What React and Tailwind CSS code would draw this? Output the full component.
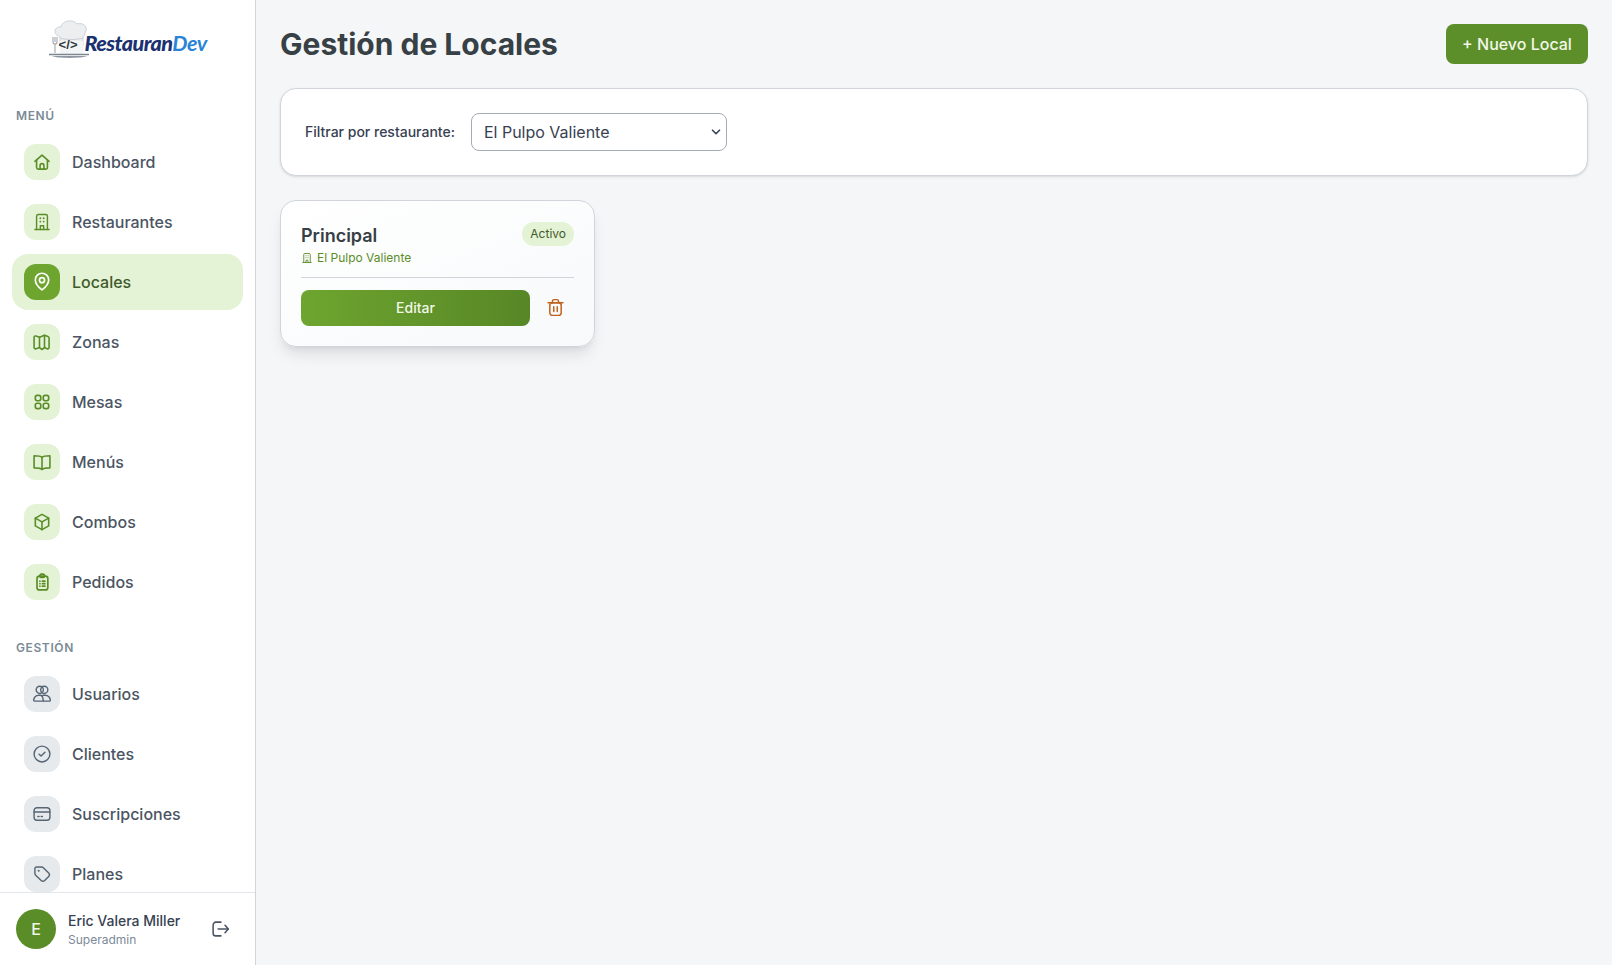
import React from "react";

const I = ({ children, size = 20, sw = 1.7 }) => (
  <svg width={size} height={size} viewBox="0 0 24 24" fill="none" stroke="currentColor" strokeWidth={sw} strokeLinecap="round" strokeLinejoin="round">
    {children}
  </svg>
);

const Home = () => <I sw={1.9}><path d="M3.500 11.200 12 3.800l8.500 7.400" /><path d="M5.500 10v8.500a2 2 0 0 0 2 2h9a2 2 0 0 0 2-2V10" /><path d="M9.700 20.500v-4.300a2.300 2.300 0 0 1 4.600 0v4.300" /></I>;
const Building = ({ size, sw }) => <I size={size} sw={sw}><path d="M3.500 21h17" /><path d="M5.500 21V5a2 2 0 0 1 2-2h9a2 2 0 0 1 2 2v16" /><path d="M10 7.500h.01M14 7.500h.01M10 11.500h.01M14 11.500h.01" strokeWidth="2.200" /><path d="M10 21v-4.500h4V21" /></I>;
const Pin = () => <I sw={2}><path d="M12 21.500s-8-6.300-8-12a8 8 0 0 1 16 0c0 5.700-8 12-8 12Z" /><circle cx="12" cy="9.800" r="3" /></I>;
const MapI = () => <I sw={1.9}><path d="M2.500 6.500c0-1.300 1.200-2.100 2.400-1.600L9 6.300l6-2.300 4.100 1.400c.9.300 1.400 1.100 1.400 2v11.100c0 1.300-1.200 2.100-2.400 1.600L15 18.700 12 21l-3-2.300-4.100 1.400C3.700 20.600 2.500 19.800 2.500 18.500Z" /><path d="M9 6.300V18.700M15 4V18.700" /></I>;
const Grid = () => <I sw={2}><rect x="4" y="4" width="6.500" height="6.500" rx="2.300" /><rect x="13.500" y="4" width="6.500" height="6.500" rx="2.300" /><rect x="4" y="13.500" width="6.500" height="6.500" rx="2.300" /><rect x="13.500" y="13.500" width="6.500" height="6.500" rx="2.300" /></I>;
const Book = () => <I sw={1.900}><path d="M12 6.500C10.300 4.900 8 4.500 2.500 4.500v14.500c5.500 0 7.800.4 9.500 2 1.700-1.600 4-2 9.500-2V4.500c-5.500 0-7.800.4-9.500 2Z" /><path d="M12 6.500V21" /></I>;
const Box = () => <I sw={1.900}><path d="M12 2.800 20 7.300v9.400l-8 4.500-8-4.500V7.300Z" /><path d="M4 7.300l8 4.500 8-4.500" /><path d="M12 11.800v9.400" /></I>;
const Clip = () => <I sw={2}><rect x="6" y="5" width="13" height="16.500" rx="3" /><path d="M9.500 5.500V4.500a2 2 0 0 1 2-2h1.500a2 2 0 0 1 2 2v1a1 1 0 0 1-1 1h-3.500a1 1 0 0 1-1-1Z" /><path d="M9.500 11h.01M9.500 14h.01M9.500 17h.01M12.500 11H15.500M12.500 14H15.500M12.500 17H15.500" /></I>;
const Users = () => <I><circle cx="9.300" cy="7" r="4.300" /><circle cx="14.700" cy="7" r="4.300" /><path d="M3 20.500c-.6 0-1-.4-1-1 0-3.300 2.700-6 6-6h2c1 0 1.600.5 2 1 .4-.5 1-1 2-1h2c3.300 0 6 2.700 6 6 0 .6-.4 1-1 1Z" /><path d="M12 14.500c1 1.200 1.500 3 1.500 6" /></I>;
const Check = () => <I><circle cx="12" cy="12" r="9.500" /><path d="m8.500 12.300 2.400 2.200 4.600-4.700" /></I>;
const Card = () => <I><rect x="2.500" y="4.500" width="19" height="15" rx="3.500" /><path d="M2.500 9.500h19" /><path d="M7 15h1.500M11 15h1.500" /></I>;
const Tag = () => <I><path d="M3.500 5.500a2 2 0 0 1 2-2h6a3 3 0 0 1 2.100.900l6.400 6.400a3 3 0 0 1 0 4.200l-4.800 4.800a3 3 0 0 1-4.200 0L4.400 13.600a3 3 0 0 1-.900-2.100Z" /><path d="M8 8h.01" strokeWidth="2.400" /></I>;
const Logout = () => <I size={22}><path d="M13 4.500H7.500a3 3 0 0 0-3 3v9a3 3 0 0 0 3 3H13" /><path d="M10 12h11" /><path d="m17.500 8 3.500 4-3.500 4" /></I>;
const Trash = () => <I size={21}><path d="M3.500 6.500h17" /><path d="M8.500 6.500V5a2 2 0 0 1 2-2h3a2 2 0 0 1 2 2v1.500" /><rect x="5.500" y="6.500" width="13" height="14.500" rx="3" /><path d="M10 11v5.500M14 11v5.500" /></I>;

const Item = ({ icon, label, active, gray }) => (
  <div className={`flex h-14 items-center gap-3 rounded-2xl px-3 ${active ? "bg-[#e4f2d5]" : ""}`}>
    <span className={`flex h-9 w-9 shrink-0 items-center justify-center rounded-xl ${active ? "bg-[#6ea52f] text-white" : gray ? "bg-[#e6eaed] text-[#566573]" : "bg-[#e4f2d5] text-[#5a8d28]"}`}>
      {icon}
    </span>
    <span className={`text-base font-medium ${active ? "text-[#3f5a2c]" : "text-[#4b5563]"}`}>{label}</span>
  </div>
);

const Logo = () => (
  <div className="flex h-[88px] items-center justify-center pb-[8px]">
    <div className="relative h-[40px] w-[160px]">
      <svg width="44" height="40" viewBox="0 0 44 40" className="absolute bottom-0 left-0">
        <path d="M11 16c-6-1-5-10 2-9 1-7 13-8 16-3 6-2 12 3 8 9 0 1-1 3-2 4v9H12v-9z" fill="#eceef0" stroke="#cfd3d7" strokeWidth="1" />
        <path d="M12 18c6 2 17 2 23 0" stroke="#c9ced3" fill="none" />
        <path d="M5 17v5c0 1 1 2 2 2v9M9 17v5c0 1-1 2-2 2M7 17v5" stroke="#a2a8ae" strokeWidth="1.100" fill="none" />
        <rect x="12" y="21" width="23" height="13" fill="#f3f4f5" />
        <path d="M1 34.500h40" stroke="#7d8791" strokeWidth="1.500" />
        <path d="M4 36c5 2.500 30 2.500 35 0z" fill="#8d96a0" />
      </svg>
      <span className="absolute bottom-[9px] left-[11px] font-['Liberation_Sans',sans-serif] text-[13px] font-bold leading-none tracking-[0.2px] text-[#343b42]">&lt;/&gt;</span>
      <span className="absolute bottom-[6px] left-[37px] font-['Lato',sans-serif] text-[21.5px] font-black italic leading-none tracking-[-0.55px] text-[#1b3270]">
        Restauran<span className="font-bold text-[#2b83d8]">Dev</span>
      </span>
    </div>
  </div>
);

export default function App() {
  return (
    <div className="flex h-screen overflow-hidden bg-[#f4f6f8] font-['Inter',sans-serif]">
      <aside className="flex w-[256px] shrink-0 flex-col border-r border-[#d1d5db] bg-white">
        <Logo />
        <div className="min-h-0 flex-1 overflow-hidden px-3">
          <p className="mt-[20px] mb-[10px] px-1 text-xs font-semibold leading-4 tracking-[0.6px] text-[#7b8a97]">MENÚ</p>
          <div className="flex flex-col gap-1">
            <Item icon={<Home />} label="Dashboard" />
            <Item icon={<Building />} label="Restaurantes" />
            <Item icon={<Pin />} label="Locales" active />
            <Item icon={<MapI />} label="Zonas" />
            <Item icon={<Grid />} label="Mesas" />
            <Item icon={<Book />} label="Menús" />
            <Item icon={<Box />} label="Combos" />
            <Item icon={<Clip />} label="Pedidos" />
          </div>
          <p className="mt-[30px] mb-[10px] px-1 text-xs font-semibold leading-4 tracking-[0.6px] text-[#7b8a97]">GESTIÓN</p>
          <div className="flex flex-col gap-1">
            <Item icon={<Users />} label="Usuarios" gray />
            <Item icon={<Check />} label="Clientes" gray />
            <Item icon={<Card />} label="Suscripciones" gray />
            <Item icon={<Tag />} label="Planes" gray />
          </div>
        </div>
        <div className="flex h-[73px] shrink-0 items-center gap-3 border-t border-[#e2e5e9] px-4">
          <span className="flex h-10 w-10 shrink-0 items-center justify-center rounded-full bg-[#5a8d28] text-base font-medium text-[#f0f7e6]">E</span>
          <div className="min-w-0 flex-1">
            <p className="text-sm font-medium leading-5 text-[#374151]">Eric Valera Miller</p>
            <p className="mt-[1px] text-xs leading-4 text-[#7b8a97]">Superadmin</p>
          </div>
          <span className="mr-2 text-[#4b5563]"><Logout /></span>
        </div>
      </aside>
      <main className="min-w-0 flex-1 p-6">
        <div className="flex h-10 items-center justify-between">
          <h1 className="text-[30px] font-bold leading-10 text-[#374045]">Gestión de Locales</h1>
          <button className="h-10 w-[142px] rounded-lg bg-[#5c8f29] text-base font-medium text-[#f2f8e9]">+ Nuevo Local</button>
        </div>
        <div className="mt-6 flex h-[88px] items-center gap-4 rounded-2xl border border-[#d1d5db] bg-white px-6 shadow-sm">
          <label className="text-sm font-medium text-[#374151]">Filtrar por restaurante:</label>
          <div className="relative">
            <select className="block h-[38px] w-[256px] appearance-none rounded-lg border border-[#a5abb5] bg-white px-3 text-base text-[#374151]">
              <option>El Pulpo Valiente</option>
            </select>
            <svg width="10" height="6" viewBox="0 0 10 6" fill="none" stroke="#374151" strokeWidth="1.600" strokeLinecap="round" strokeLinejoin="round" className="pointer-events-none absolute right-[6px] top-[16px]">
              <path d="m1.500 1.200 3.500 3.500 3.500-3.500" />
            </svg>
          </div>
        </div>
        <div className="mt-6 w-[315px] rounded-2xl border border-[#d1d5db] bg-gradient-to-br from-white to-[#f7f9fa] p-5 shadow-lg">
          <div className="flex items-start justify-between">
            <div>
              <h2 className="mt-[1px] text-lg font-semibold leading-7 text-[#374045]">Principal</h2>
              <p className="-mt-[1px] flex items-center gap-1 text-xs leading-[18px] text-[#5a8d28]"><Building size={12} sw={1.8} />El Pulpo Valiente</p>
            </div>
            <span className="mt-[1px] rounded-full bg-[#e4f2d5] px-2 py-1 text-xs leading-4 text-[#3f5a2c]">Activo</span>
          </div>
          <div className="mt-[10px] border-t border-[#d1d5db]" />
          <div className="mt-3 flex items-center">
            <button className="h-9 w-[229px] rounded-lg bg-gradient-to-r from-[#6ea52f] to-[#578726] text-sm font-medium text-[#f2f8e9]">Editar</button>
            <span className="ml-[15px] -mt-[1px] text-[#c2611c]"><Trash /></span>
          </div>
        </div>
      </main>
    </div>
  );
}
